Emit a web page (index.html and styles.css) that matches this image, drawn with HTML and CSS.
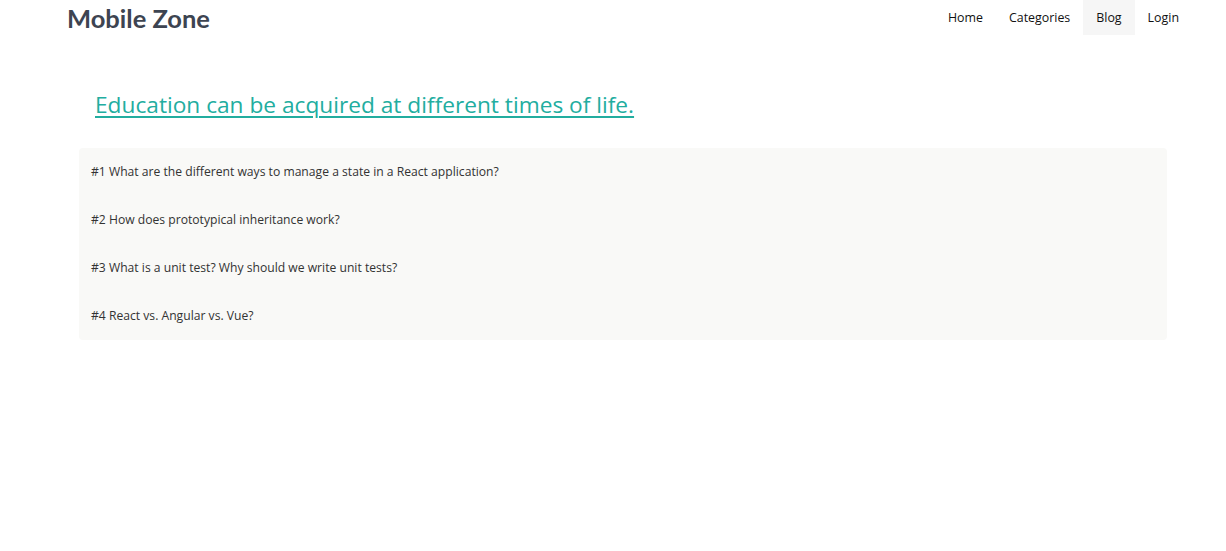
FILE: index.html
```html
<!DOCTYPE html>
<html>
<head>
<meta charset="utf-8">
<link rel="stylesheet" href="styles.css">
</head>
<body>
<header class="topbar">
  <a class="brand" href="#">Mobile Zone</a>
  <nav class="nav">
    <a href="#" class="nav-link">Home</a>
    <a href="#" class="nav-link">Categories</a>
    <a href="#" class="nav-link active">Blog</a>
    <a href="#" class="nav-link">Login</a>
  </nav>
</header>
<main class="content">
  <h1 class="headline"><a href="#">Education can be acquired at different times of life.</a></h1>
  <div class="faq">
    <div class="faq-item">#1 What are the different ways to manage a state in a React application?</div>
    <div class="faq-item">#2 How does prototypical inheritance work?</div>
    <div class="faq-item">#3 What is a unit test? Why should we write unit tests?</div>
    <div class="faq-item">#4 React vs. Angular vs. Vue?</div>
  </div>
</main>
</body>
</html>
```
FILE: styles.css
```css
* { box-sizing: border-box; }
body {
  margin: 0;
  background: #fff;
  font-family: "Open Sans", "Noto Sans", sans-serif;
  color: #1f2937;
}
a { text-decoration: none; color: inherit; }
.topbar {
  display: flex;
  justify-content: space-between;
  align-items: flex-start;
  padding: 0 34px 0 67px;
  height: 36px;
}
.brand {
  font-family: Lato, "Open Sans", sans-serif;
  font-weight: 700;
  font-size: 25.5px;
  color: #3d4451;
  line-height: 36px;
}
.nav { display: flex; }
.nav-link {
  display: block;
  height: 35px;
  line-height: 35px;
  padding: 0 13px;
  font-size: 12.4px;
  color: #111;
}
.nav-link.active { background: #f6f6f6; }
.content {
  padding: 52px 59px 0 79px;
}
.headline {
  margin: 0 0 26px 16px;
  font-weight: 400;
  font-size: 22.7px;
  line-height: 34px;
}
.headline a {
  color: #22ad9f;
  text-decoration: underline;
  text-underline-offset: 3px;
  text-decoration-thickness: 2px;
}
.faq {
  background: #f9f9f7;
  border-radius: 4px;
}
.faq-item {
  height: 48px;
  line-height: 48px;
  padding: 0 12px;
  font-size: 12.15px;
  color: #333;
}
```
